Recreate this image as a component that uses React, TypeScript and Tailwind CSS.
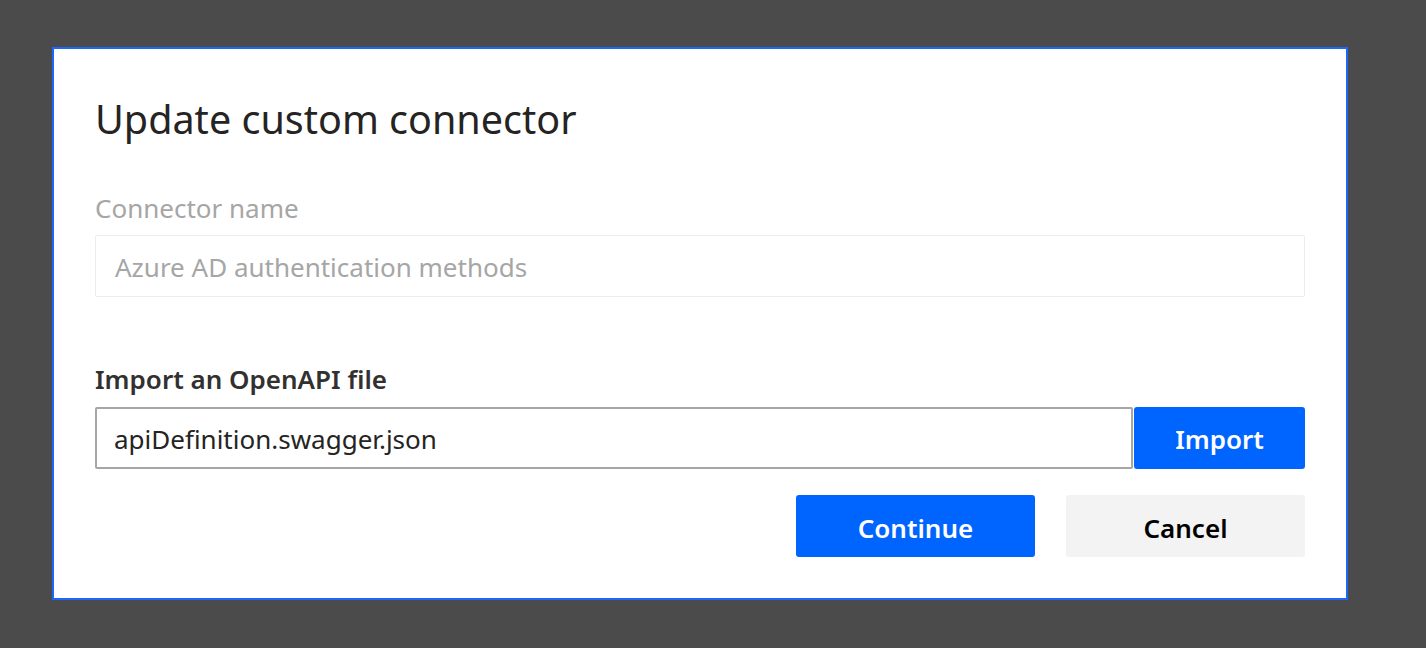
export default function App() {
  return (
    <div
      className="h-[648px] w-[1426px] bg-[#4b4b4b] pt-[47px] pl-[52px]"
      style={{ fontFamily: '"Noto Sans", "Open Sans", sans-serif' }}
    >
      <div className="flex h-[553px] w-[1296px] flex-col border-2 border-[#1a66ff] bg-white px-[41px]">
        <h1 className="mt-[44px] text-[39.5px] leading-[52px] text-[#252423]">Update custom connector</h1>

        <label className="mt-[48px] text-[26px] leading-[30px] text-[#a6a6a6]">Connector name</label>
        <div className="mt-[12px] flex h-[62px] items-center rounded-[2px] border border-[#ededed] px-[19px] pt-[3px] text-[26px] text-[#a6a6a6]">
          Azure AD authentication methods
        </div>

        <label className="mt-[67px] text-[26px] font-semibold leading-[30px] text-[#323130]">
          Import an OpenAPI file
        </label>
        <div className="mt-[13px] flex h-[62px]">
          <div className="flex flex-1 items-center rounded-[2px] border-2 border-[#a6a6a6] px-[17px] pt-[3px] text-[26px] text-[#252423]">
            apiDefinition.swagger.json
          </div>
          <button className="ml-px w-[171px] rounded-[3px] bg-[#0064ff] pt-[3px] text-[26px] font-semibold text-white">
            Import
          </button>
        </div>

        <div className="mt-[26px] flex justify-end gap-[31px]">
          <button className="h-[62px] w-[239px] rounded-[3px] bg-[#0064ff] pt-[4px] text-[26px] font-semibold text-white">
            Continue
          </button>
          <button className="h-[62px] w-[239px] rounded-[3px] bg-[#f3f3f3] pt-[4px] text-[26px] font-semibold text-black">
            Cancel
          </button>
        </div>
      </div>
    </div>
  );
}
